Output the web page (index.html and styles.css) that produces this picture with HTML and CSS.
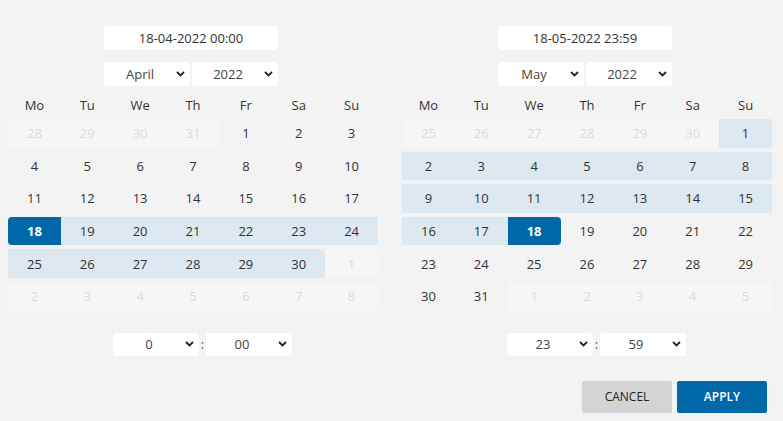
FILE: index.html
```html
<!DOCTYPE html>
<html lang="en">
<head>
    <meta charset="UTF-8">
    <meta name="viewport" content="width=device-width, initial-scale=1.0">
    <title>Date range</title>
    <link rel="stylesheet" href="styles.css">
</head>
<body>
    <div class="picker">
        <div class="panels">
            <!-- start date -->
            <div class="panel">
                <div class="panel-head">
                    <div class="date-input">18-04-2022 00:00</div>
                    <div class="selects">
                        <div class="select"><span>April</span><svg width="9" height="6" viewBox="0 0 9 6"><path d="M1 1l3.5 3.5L8 1" fill="none" stroke="#222" stroke-width="1.8"/></svg></div>
                        <div class="select"><span>2022</span><svg width="9" height="6" viewBox="0 0 9 6"><path d="M1 1l3.5 3.5L8 1" fill="none" stroke="#222" stroke-width="1.8"/></svg></div>
                    </div>
                </div>
                <div class="weekdays">
                    <span>Mo</span><span>Tu</span><span>We</span><span>Th</span><span>Fr</span><span>Sa</span><span>Su</span>
                </div>
                <div class="days">
                    <div class="day off">28</div><div class="day off">29</div><div class="day off">30</div><div class="day off">31</div><div class="day">1</div><div class="day">2</div><div class="day">3</div>
                    <div class="day">4</div><div class="day">5</div><div class="day">6</div><div class="day">7</div><div class="day">8</div><div class="day">9</div><div class="day">10</div>
                    <div class="day">11</div><div class="day">12</div><div class="day">13</div><div class="day">14</div><div class="day">15</div><div class="day">16</div><div class="day">17</div>
                    <div class="day selected start">18</div><div class="day range">19</div><div class="day range">20</div><div class="day range">21</div><div class="day range">22</div><div class="day range">23</div><div class="day range">24</div>
                    <div class="day range">25</div><div class="day range">26</div><div class="day range">27</div><div class="day range">28</div><div class="day range">29</div><div class="day range">30</div><div class="day off">1</div>
                    <div class="day off">2</div><div class="day off">3</div><div class="day off">4</div><div class="day off">5</div><div class="day off">6</div><div class="day off">7</div><div class="day off">8</div>
                </div>
                <div class="time">
                    <div class="select"><span>0</span><svg width="9" height="6" viewBox="0 0 9 6"><path d="M1 1l3.5 3.5L8 1" fill="none" stroke="#222" stroke-width="1.8"/></svg></div>
                    <span class="colon">:</span>
                    <div class="select"><span>00</span><svg width="9" height="6" viewBox="0 0 9 6"><path d="M1 1l3.5 3.5L8 1" fill="none" stroke="#222" stroke-width="1.8"/></svg></div>
                </div>
            </div>

            <!-- end date -->
            <div class="panel">
                <div class="panel-head">
                    <div class="date-input">18-05-2022 23:59</div>
                    <div class="selects">
                        <div class="select"><span>May</span><svg width="9" height="6" viewBox="0 0 9 6"><path d="M1 1l3.5 3.5L8 1" fill="none" stroke="#222" stroke-width="1.8"/></svg></div>
                        <div class="select"><span>2022</span><svg width="9" height="6" viewBox="0 0 9 6"><path d="M1 1l3.5 3.5L8 1" fill="none" stroke="#222" stroke-width="1.8"/></svg></div>
                    </div>
                </div>
                <div class="weekdays">
                    <span>Mo</span><span>Tu</span><span>We</span><span>Th</span><span>Fr</span><span>Sa</span><span>Su</span>
                </div>
                <div class="days">
                    <div class="day off">25</div><div class="day off">26</div><div class="day off">27</div><div class="day off">28</div><div class="day off">29</div><div class="day off">30</div><div class="day range">1</div>
                    <div class="day range">2</div><div class="day range">3</div><div class="day range">4</div><div class="day range">5</div><div class="day range">6</div><div class="day range">7</div><div class="day range">8</div>
                    <div class="day range">9</div><div class="day range">10</div><div class="day range">11</div><div class="day range">12</div><div class="day range">13</div><div class="day range">14</div><div class="day range">15</div>
                    <div class="day range">16</div><div class="day range">17</div><div class="day selected end">18</div><div class="day">19</div><div class="day">20</div><div class="day">21</div><div class="day">22</div>
                    <div class="day">23</div><div class="day">24</div><div class="day">25</div><div class="day">26</div><div class="day">27</div><div class="day">28</div><div class="day">29</div>
                    <div class="day">30</div><div class="day">31</div><div class="day off">1</div><div class="day off">2</div><div class="day off">3</div><div class="day off">4</div><div class="day off">5</div>
                </div>
                <div class="time">
                    <div class="select"><span>23</span><svg width="9" height="6" viewBox="0 0 9 6"><path d="M1 1l3.5 3.5L8 1" fill="none" stroke="#222" stroke-width="1.8"/></svg></div>
                    <span class="colon">:</span>
                    <div class="select"><span>59</span><svg width="9" height="6" viewBox="0 0 9 6"><path d="M1 1l3.5 3.5L8 1" fill="none" stroke="#222" stroke-width="1.8"/></svg></div>
                </div>
            </div>
        </div>

        <div class="actions">
            <button class="btn cancel">CANCEL</button>
            <button class="btn apply">APPLY</button>
        </div>
    </div>
</body>
</html>
```

FILE: styles.css
```css
body {
    font-family: "Open Sans", "Liberation Sans", sans-serif;
    margin: 0;
    padding: 0;
    background-color: #f3f3f3;
    color: #333;
    font-size: 13px;
}

.picker {
    padding-top: 26px;
}

.panels {
    display: flex;
    gap: 24px;
    padding: 0 11px 0 8px;
}

.panel {
    width: 370px;
}

.panel-head {
    display: flex;
    flex-direction: column;
    align-items: center;
    padding-right: 4px;
}

.date-input {
    width: 174px;
    height: 24px;
    line-height: 24px;
    background-color: white;
    border-radius: 3px;
    text-align: center;
}

.selects {
    display: flex;
    gap: 2px;
    margin-top: 12px;
}

.select {
    width: 86px;
    height: 24px;
    display: flex;
    align-items: center;
    background-color: white;
    border-radius: 3px;
    color: #444;
}

.select span {
    flex: 1;
    text-align: center;
}

.select svg {
    margin-right: 5px;
}

.weekdays {
    display: grid;
    grid-template-columns: repeat(7, 1fr);
    height: 22px;
    line-height: 22px;
    margin: 8px 0 3px;
    text-align: center;
}

.days {
    display: grid;
    grid-template-columns: repeat(7, 1fr);
    grid-auto-rows: 28.6px;
    row-gap: 4px;
}

.day {
    display: flex;
    align-items: center;
    justify-content: center;
}

.day.off {
    background-color: #f6f6f6;
    border-radius: 4px;
    color: #dadada;
}

.day.range {
    background-color: #dde8f0;
}

.day.selected {
    background-color: #0067a9;
    color: white;
    font-weight: 700;
}

.day.start {
    border-radius: 4px 0 0 4px;
}

.day.end {
    border-radius: 0 4px 4px 0;
}

.time {
    display: flex;
    justify-content: center;
    align-items: center;
    margin-top: 22px;
    padding-left: 19px;
}

.time .select {
    height: 23px;
}

.colon {
    width: 7px;
    text-align: center;
    color: #555;
}

.actions {
    display: flex;
    justify-content: flex-end;
    gap: 5px;
    margin-top: 25px;
    padding-right: 16px;
}

.btn {
    width: 90px;
    height: 32px;
    border: none;
    border-radius: 2px;
    font-family: "Open Sans", "Liberation Sans", sans-serif;
    font-size: 12px;
    cursor: pointer;
}

.cancel {
    background-color: #d4d4d4;
    color: #222;
}

.apply {
    background-color: #0067a9;
    color: white;
    font-weight: 600;
}
```
